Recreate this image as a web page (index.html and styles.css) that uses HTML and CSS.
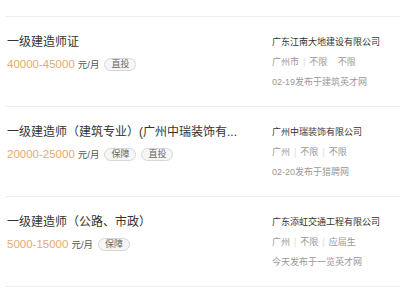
FILE: index.html
```html
<!DOCTYPE html>
<html lang="zh-CN">
<head>
  <meta charset="UTF-8" />
  <meta name="viewport" content="width=device-width, initial-scale=1" />
  <title>职位列表</title>
  <link rel="stylesheet" href="styles.css">
</head>
<body>

  <ul class="job-list">
    <li class="job">
      <div class="job-main">
        <div class="job-title">一级建造师证</div>
        <div class="job-pay">
          <span class="salary">40000-45000</span>
          <span class="unit">元/月</span>
          <span class="tag">直投</span>
        </div>
      </div>
      <div class="job-side">
        <div class="company">广东江南大地建设有限公司</div>
        <div class="meta">广州市<i class="sep">|</i>不限<i class="sep blank">|</i>不限</div>
        <div class="meta">02-19发布于建筑英才网</div>
      </div>
    </li>

    <li class="job">
      <div class="job-main">
        <div class="job-title">一级建造师（建筑专业）(广州中瑞装饰有...</div>
        <div class="job-pay">
          <span class="salary">20000-25000</span>
          <span class="unit">元/月</span>
          <span class="tag">保障</span>
          <span class="tag">直投</span>
        </div>
      </div>
      <div class="job-side">
        <div class="company">广州中瑞装饰有限公司</div>
        <div class="meta">广州<i class="sep">|</i>不限<i class="sep">|</i>不限</div>
        <div class="meta">02-20发布于猎聘网</div>
      </div>
    </li>

    <li class="job">
      <div class="job-main">
        <div class="job-title">一级建造师（公路、市政）</div>
        <div class="job-pay">
          <span class="salary">5000-15000</span>
          <span class="unit">元/月</span>
          <span class="tag">保障</span>
        </div>
      </div>
      <div class="job-side">
        <div class="company">广东添虹交通工程有限公司</div>
        <div class="meta">广州<i class="sep">|</i>不限<i class="sep">|</i>应届生</div>
        <div class="meta">今天发布于一览英才网</div>
      </div>
    </li>

    <li class="job"></li>
  </ul>

</body>
</html>
```

FILE: styles.css
```css
/* Reset & basics */
* {
  box-sizing: border-box;
  font-family: 'Liberation Sans', 'Noto Sans CJK SC', sans-serif;
}
body {
  margin: 0;
  padding: 16px 0 0 5px;
  background: #fff;
  color: #333;
  overflow: hidden;
}

/* List */
.job-list {
  list-style: none;
  margin: 0;
  padding: 0;
}
.job {
  display: flex;
  height: 90px;
  padding: 15px 0 0 2px;
  border-top: 1px solid #eeeeee;
}

/* Left column */
.job-main {
  width: 236px;
  flex-shrink: 0;
}
.job-title {
  font-size: 12px;
  line-height: 20px;
  color: #333;
  white-space: nowrap;
}
.job-pay {
  display: flex;
  align-items: center;
  margin-top: 2px;
  height: 20px;
}
.salary {
  font-size: 11.5px;
  color: #e4aa72;
}
.unit {
  font-size: 9.5px;
  color: #555;
  margin-left: 3px;
}
.tag {
  font-size: 9px;
  line-height: 11px;
  color: #666;
  background: #f6f6f6;
  border: 1px solid #d6d6d6;
  border-radius: 7px;
  padding: 0 6px;
  margin-left: 5px;
}

/* Right column */
.job-side {
  margin-left: 29px;
  font-size: 9px;
  line-height: 20px;
}
.company {
  color: #333;
}
.meta {
  color: #999;
}
.sep {
  font-style: normal;
  color: #ddd;
  margin: 0 4px;
}
.sep.blank {
  visibility: hidden;
}
```
